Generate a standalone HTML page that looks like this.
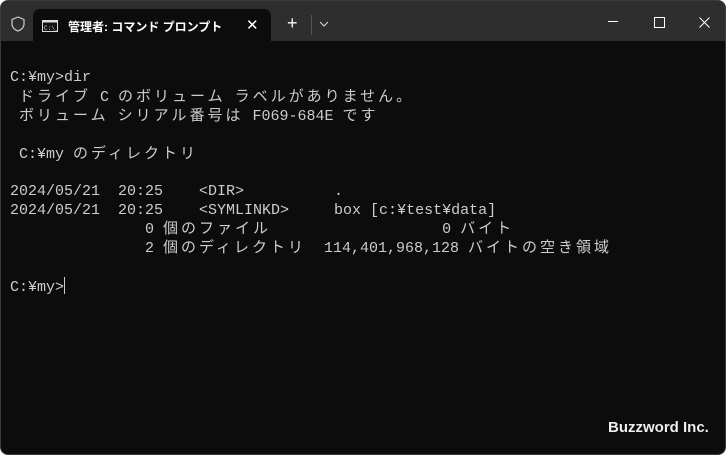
<!DOCTYPE html>
<html><head><meta charset="utf-8"><style>
html,body{margin:0;padding:0;background:#fff;width:728px;height:457px;overflow:hidden}
#win{position:absolute;left:0;top:0;width:726px;height:455px;border-radius:8px;background:#0c0c0c;overflow:hidden;border:1px solid #3a3a3a;box-sizing:border-box}
#title{position:absolute;left:0;top:0;right:0;height:40px;background:#2e2e2e}
#tab{position:absolute;left:32px;top:8px;width:238px;height:34px;background:#0c0c0c;border-radius:7px 7px 0 0}
.t{font-family:"Liberation Sans","Noto Sans CJK JP",sans-serif;color:#fff;font-size:12px;position:absolute}
#term{position:absolute;left:9px;top:0;font-family:"Liberation Mono","Noto Sans CJK JP",monospace;font-size:15px;color:#cccccc}
.l{position:absolute;white-space:pre;height:19px;line-height:19px;left:0}
.j{letter-spacing:3px}
</style></head><body>
<div id="win">
<div id="title">
<svg style="position:absolute;left:10px;top:15px" width="14" height="16" viewBox="0 0 14 16"><path d="M7 1 L13 3.5 V8 C13 11.5 10 14 7 15 C4 14 1 11.5 1 8 V3.5 Z" fill="none" stroke="#cfcfcf" stroke-width="1.2"/></svg>
<div id="tab">
<svg style="position:absolute;left:9px;top:11px" width="16" height="12" viewBox="0 0 16 12"><rect x="0.5" y="0.5" width="15" height="11" fill="#111" stroke="#ddd"/><rect x="0.5" y="0.5" width="15" height="2" fill="#ddd"/><text x="2" y="10" font-size="6" fill="#ddd" font-family="Liberation Mono">C:\_</text></svg>
<div class="t" style="left:35px;top:9px;font-weight:bold">管理者: コマンド プロンプト</div>
<div class="t" style="left:213px;top:7px;font-size:15px">✕</div>
</div>
<div class="t" style="left:286px;top:13px;font-size:18px;font-weight:300;line-height:18px">+</div>
<div style="position:absolute;left:310px;top:14px;width:1px;height:20px;background:#555"></div>
<svg style="position:absolute;left:318px;top:20px" width="10" height="6"><path d="M1 1 L5 5 L9 1" stroke="#ddd" fill="none"/></svg>
<div style="position:absolute;left:607px;top:20px;width:10px;height:1px;background:#fff"></div>
<div style="position:absolute;left:653px;top:16px;width:9px;height:9px;border:1px solid #fff"></div>
<svg style="position:absolute;left:698px;top:16px" width="11" height="11"><path d="M0.5 0.5 L10.5 10.5 M10.5 0.5 L0.5 10.5" stroke="#fff"/></svg>
</div>
<div id="term">
<div class="l" style="top:67px">C:¥my&gt;dir</div>
<div class="l" style="top:87px"> <span class="j">ドライブ</span> C <span class="j">のボリューム</span> <span class="j">ラベルがありません。</span></div>
<div class="l" style="top:106px"> <span class="j">ボリューム</span> <span class="j">シリアル番号は</span> F069-684E <span class="j">です</span></div>
<div class="l" style="top:144px"> C:¥my <span class="j">のディレクトリ</span></div>
<div class="l" style="top:181px">2024/05/21  20:25    &lt;DIR&gt;          .</div>
<div class="l" style="top:200px">2024/05/21  20:25    &lt;SYMLINKD&gt;     box [c:¥test¥data]</div>
<div class="l" style="top:219px">               0 <span class="j">個のファイル</span>                   0 <span class="j">バイト</span></div>
<div class="l" style="top:238px">               2 <span class="j">個のディレクトリ</span>  114,401,968,128 <span class="j">バイトの空き領域</span></div>
<div class="l" style="top:276px">C:¥my&gt;<span style="display:inline-block;width:1px;height:17px;background:#ccc;vertical-align:-3px"></span></div>
</div>
<div class="t" style="left:607px;top:418px;font-size:15px;color:#eee;font-weight:bold">Buzzword Inc.</div>
</div>
</body></html>
